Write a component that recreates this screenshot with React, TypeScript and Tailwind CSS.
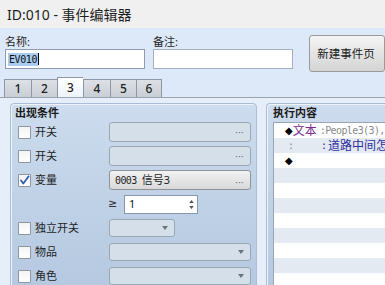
import React from "react";

const sans = "font-['Noto_Sans','Noto_Sans_CJK_SC',sans-serif]";
const mono = "font-['DejaVu_Sans_Mono','Noto_Sans_CJK_SC',monospace]";

function Check({ checked }: { checked?: boolean }) {
    return (
        <div className="relative h-[13px] w-[13px] shrink-0 rounded-[1px] border border-[#8e96a0] bg-gradient-to-b from-[#f4f4f4] to-white">
            {checked && (
                <svg viewBox="0 0 13 13" className="absolute -left-px -top-px h-[13px] w-[13px]">
                    <path d="M3 6.5 L5.3 9.5 L10.5 2.5" fill="none" stroke="#2b5fae" strokeWidth="1.8" strokeLinecap="round" strokeLinejoin="round" />
                </svg>
            )}
        </div>
    );
}

function Dots() {
    return <span className="text-[9px] leading-none tracking-[0.5px] text-[#5a6470]">···</span>;
}

function Arrow() {
    return (
        <svg viewBox="0 0 6 4" className="h-[4px] w-[6px]">
            <path d="M0 0 H6 L3 4 Z" fill="#6b737c" />
        </svg>
    );
}

function Row({ label, checked, children }: { label: string; checked?: boolean; children: React.ReactNode }) {
    return (
        <div className="flex h-[24px] items-center pl-[7px]">
            <div className="flex w-[91px] items-center gap-[4px]">
                <Check checked={checked} />
                <span className="text-[11px] leading-[14px] text-[#1e1e1e]">{label}</span>
            </div>
            {children}
        </div>
    );
}

const disabled = "flex items-center justify-end rounded-[3px] border border-[#9ba6b3] bg-[#d5dfea]";

export default function App() {
    const tabs = [
        { n: "1", w: "w-[27px]" },
        { n: "2", w: "w-[26px]" },
        { n: "3", w: "w-[26px]", active: true },
        { n: "4", w: "w-[27px]" },
        { n: "5", w: "w-[26px]" },
        { n: "6", w: "w-[26px]" },
    ];

    return (
        <div className={`h-[285px] w-[385px] overflow-hidden bg-[#dde9f8] ${sans}`}>
            <div className="flex h-[28px] items-center bg-[#f0f0f0] pl-[7px] text-[14px] text-[#1f1f1f]">ID:010 - 事件编辑器</div>

            <div className="flex pl-[5px] pt-[7px]">
                <div className="flex w-[142px] flex-col">
                    <span className="text-[11px] leading-[14px] text-[#1e1e1e]">名称:</span>
                    <div className="flex h-[20px] items-center border border-[#8d9cae] bg-white pl-[2px]">
                        <span className={`${mono} bg-[#a9cdf0] px-px text-[10px] leading-[13px] tracking-[-0.4px] text-[#111]`}>EV010</span>
                        <span className="h-[12px] w-px bg-black" />
                    </div>
                </div>
                <div className="ml-[8px] flex w-[142px] flex-col">
                    <span className="text-[11px] leading-[14px] text-[#1e1e1e]">备注:</span>
                    <div className="h-[20px] border border-[#a4b0be] bg-white" />
                </div>
                <div className="ml-[16px] flex h-[37px] w-[76px] shrink-0 items-center justify-center rounded-[3px] border border-[#9a9a9a] bg-gradient-to-b from-[#f4f4f4] to-[#d4d4d4] pr-[2px] text-[11.5px] text-[#202020]">
                    新建事件页
                </div>
            </div>

            <div className="mt-[5px] flex h-[20px] items-end pl-[4px]">
                {tabs.map((t, i) => (
                    <div
                        key={t.n}
                        className={`${t.w} flex items-center justify-center border-l border-t border-[#8d97a3] text-[12px] font-medium text-[#222] ${i === tabs.length - 1 ? "border-r" : ""} ${
                            t.active ? "h-[20px] bg-gradient-to-b from-white to-[#eef4fb]" : "h-[18px] bg-gradient-to-b from-[#dde1e6] to-[#c9ced5]"
                        }`}
                    >
                        {t.n}
                    </div>
                ))}
            </div>

            <div className="flex h-[200px] gap-[9px] border-t border-[#9aa4af] bg-[#e6eff9] pl-[10px] pt-[5px]">
                <div className="h-[200px] w-[247px] shrink-0 rounded-[4px] border border-[#a9bdd5] bg-gradient-to-b from-[#cddcee] to-[#b3c7df] shadow-[inset_1px_1px_0_#eef4fb]">
                    <div className="h-[16px] pl-[4px] pt-[2px] text-[11px] font-bold leading-[14px] text-[#1a1a1a]">出现条件</div>

                    <Row label="开关">
                        <div className={`${disabled} h-[20px] w-[142px] pr-[6px]`}>
                            <Dots />
                        </div>
                    </Row>
                    <Row label="开关">
                        <div className={`${disabled} h-[20px] w-[142px] pr-[6px]`}>
                            <Dots />
                        </div>
                    </Row>
                    <Row label="变量" checked>
                        <div className="flex h-[20px] w-[142px] items-center rounded-[3px] border border-[#8f9398] bg-gradient-to-b from-[#f2f2f2] to-[#d9d9d9] pl-[5px] pr-[6px] text-[#1e1e1e]">
                            <span className={`${mono} text-[10px] tracking-[-0.6px]`}>0003</span>
                            <span className="ml-[5px] text-[11px] leading-[14px]">信号3</span>
                            <span className="ml-auto">
                                <Dots />
                            </span>
                        </div>
                    </Row>
                    <div className="flex h-[24px] items-center pl-[97px]">
                        <span className="w-[16px] font-['DejaVu_Sans',sans-serif] text-[11px] text-[#333]">≥</span>
                        <div className="flex h-[19px] w-[74px] items-center border border-[#8698ad] bg-white pl-[4px] pr-[3px]">
                            <span className="text-[11px] text-[#111]">1</span>
                            <div className="ml-auto flex flex-col gap-[3px]">
                                <svg viewBox="0 0 6 4" className="h-[3px] w-[5px]">
                                    <path d="M0 4 H6 L3 0 Z" fill="#555" />
                                </svg>
                                <svg viewBox="0 0 6 4" className="h-[3px] w-[5px]">
                                    <path d="M0 0 H6 L3 4 Z" fill="#555" />
                                </svg>
                            </div>
                        </div>
                    </div>
                    <Row label="独立开关">
                        <div className={`${disabled} h-[18px] w-[66px] pr-[6px]`}>
                            <Arrow />
                        </div>
                    </Row>
                    <Row label="物品">
                        <div className={`${disabled} h-[18px] w-[142px] pr-[6px]`}>
                            <Arrow />
                        </div>
                    </Row>
                    <Row label="角色">
                        <div className={`${disabled} h-[18px] w-[142px] pr-[6px]`}>
                            <Arrow />
                        </div>
                    </Row>
                </div>

                <div className="h-[200px] w-[130px] shrink-0 rounded-tl-[4px] border-l border-t border-[#a9bdd5] bg-gradient-to-b from-[#cddcee] to-[#b3c7df] pl-[6px] shadow-[inset_1px_1px_0_#eef4fb]">
                    <div className="h-[18px] pt-[2px] text-[11px] font-bold leading-[14px] text-[#1a1a1a]">执行内容</div>
                    <div className="overflow-hidden border-l border-t border-[#98a4b2] text-[12px] leading-[15px]">
                        <div className="flex h-[15px] items-center bg-white pl-[11px]">
                            <span className="font-['DejaVu_Sans'] text-[10px] text-black">◆</span>
                            <span className="text-[#7b2c8c]">文本</span>
                            <span className={`${mono} ml-[3px] text-[10px] tracking-[-0.6px] text-[#8a8a8a]`}>:People3(3),</span>
                        </div>
                        <div className="flex h-[15px] items-center whitespace-nowrap bg-[#e3eaf2] pl-[14px]">
                            <span className={`${mono} text-[10px] text-[#8a8a8a]`}>:</span>
                            <span className={`${mono} ml-[27px] text-[10px] text-[#2d2d9e]`}>:</span>
                            <span className="ml-[1px] text-[#2d2d9e]">道路中间怎</span>
                        </div>
                        <div className="flex h-[15px] items-center bg-white pl-[11px]">
                            <span className="font-['DejaVu_Sans'] text-[10px] text-black">◆</span>
                        </div>
                        {[0, 1, 2, 3, 4, 5, 6, 7].map((i) => (
                            <div key={i} className={`h-[15px] ${i % 2 === 0 ? "bg-[#e3eaf2]" : "bg-white"}`} />
                        ))}
                    </div>
                </div>
            </div>
        </div>
    );
}
